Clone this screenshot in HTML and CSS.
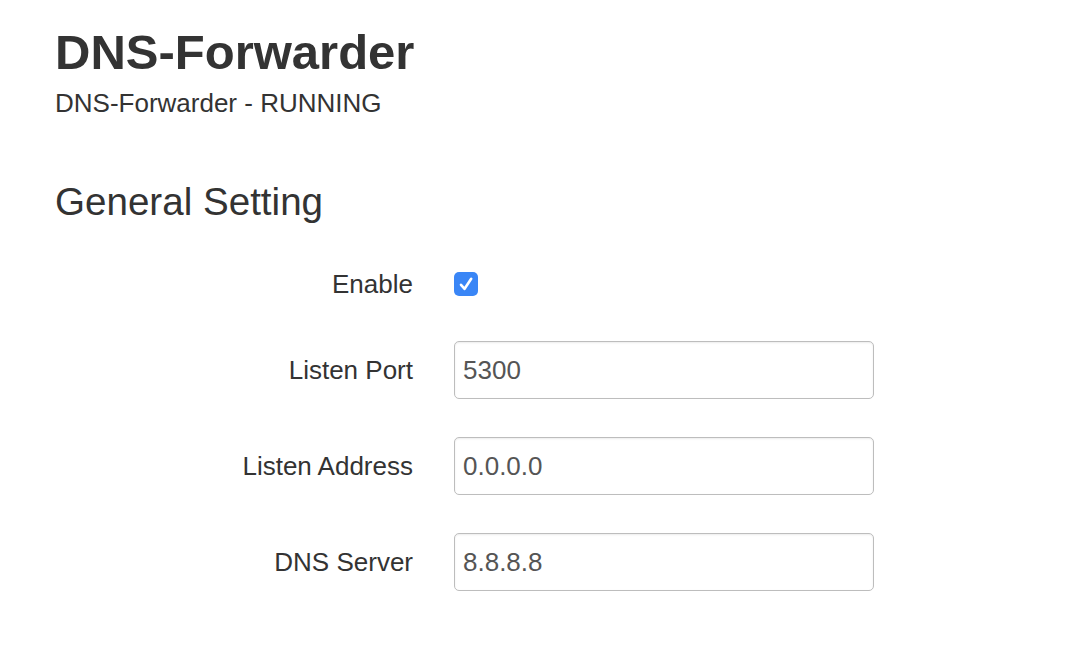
FILE: index.html
```html
<!DOCTYPE html>
<html>
<head>
<meta charset="utf-8">
<link rel="stylesheet" href="styles.css">
</head>
<body>
<div class="page">
  <h1 class="title">DNS-Forwarder</h1>
  <div class="status">DNS-Forwarder - RUNNING</div>
  <h2 class="section">General Setting</h2>
  <div class="form">
    <div class="row row-check">
      <label class="label">Enable</label>
      <div class="field">
        <span class="checkbox">
          <svg width="24" height="24" viewBox="0 0 24 24"><path d="M7 12.8 L10.6 16.8 L17.2 6.8" fill="none" stroke="#fff" stroke-width="2.6" stroke-linecap="round" stroke-linejoin="round"/></svg>
        </span>
      </div>
    </div>
    <div class="row">
      <label class="label">Listen Port</label>
      <div class="field"><input class="input" type="text" value="5300"></div>
    </div>
    <div class="row">
      <label class="label">Listen Address</label>
      <div class="field"><input class="input" type="text" value="0.0.0.0"></div>
    </div>
    <div class="row">
      <label class="label">DNS Server</label>
      <div class="field"><input class="input" type="text" value="8.8.8.8"></div>
    </div>
  </div>
</div>
</body>
</html>
```
FILE: styles.css
```css
html, body {
  margin: 0;
  padding: 0;
  background: #fff;
}
body {
  font-family: "Liberation Sans", Arial, sans-serif;
  color: #333;
}
.page {
  padding: 26px 0 0 55px;
}
.title {
  margin: 0;
  font-size: 49px;
  line-height: 53px;
  font-weight: bold;
  letter-spacing: 0;
}
.status {
  margin-top: 6px;
  font-size: 26px;
  line-height: 36px;
}
.section {
  margin: 60px 0 0 0;
  font-size: 38.6px;
  line-height: 42px;
  font-weight: normal;
}
.form {
  margin-top: 46px;
  display: flex;
  flex-direction: column;
}
.row {
  display: grid;
  grid-template-columns: 358px 420px;
  column-gap: 41px;
  align-items: center;
  padding: 19px 0;
}
.row-check {
  padding: 0 0 23px 0;
}
.label {
  text-align: right;
  font-size: 26px;
  line-height: 30px;
  color: #333;
}
.field {
  display: flex;
  align-items: center;
}
.checkbox {
  width: 24px;
  height: 24px;
  border-radius: 5px;
  background: #3a86f6;
  display: block;
}
.checkbox svg {
  display: block;
}
.input {
  box-sizing: border-box;
  width: 420px;
  height: 58px;
  margin: 0;
  padding: 0 8px;
  border: 1px solid #bdbdbd;
  border-radius: 5px;
  box-shadow: inset 0 1px 2px rgba(0, 0, 0, 0.08);
  font-family: "Liberation Sans", Arial, sans-serif;
  font-size: 26px;
  color: #555;
  background: #fff;
  outline: none;
}
```
